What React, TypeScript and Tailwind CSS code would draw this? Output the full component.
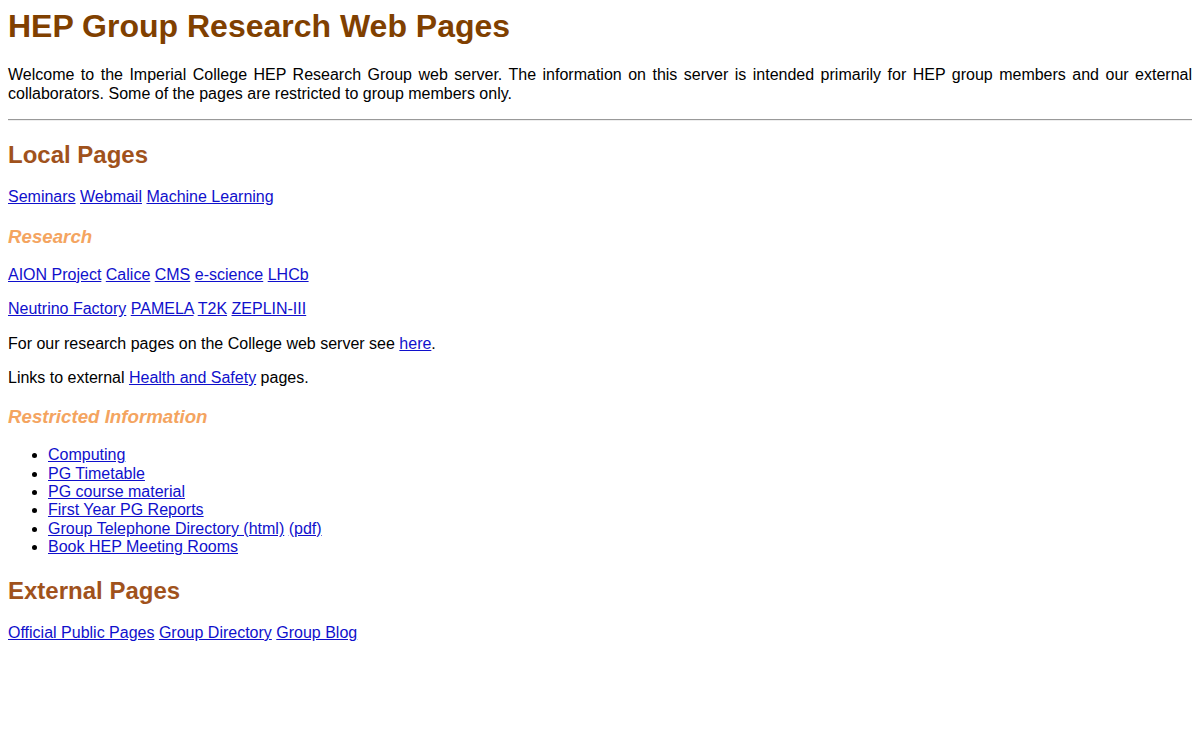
const A = ({ children }: { children: React.ReactNode }) => (
  <a href="#" className="text-[#1010cc] underline">{children}</a>
);
import React from "react";

export default function App() {
  const p = "my-4";
  const h3 = "text-[18.72px] font-bold italic text-[#f4a460] my-[18.72px]";
  const h2 = "text-[24px] font-bold text-[#a0521c] my-[19.92px]";
  return (
    <div className="p-2 bg-white text-black text-[16px] leading-[1.15] min-h-[740px]" style={{ fontFamily: '"Liberation Sans", Arial, sans-serif' }}>
      <h1 className="text-[32px] font-bold text-[#804000] mt-0 mb-[21.44px]">HEP Group Research Web Pages</h1>
      <p className={p + " text-justify"}>
        Welcome to the Imperial College HEP Research Group web server. The information on this server is intended primarily for HEP group members and our external collaborators. Some of the pages are restricted to group members only.
      </p>
      <hr className="my-2 border-t border-[#999] border-b border-b-[#eee]" />
      <h2 className={h2}>Local Pages</h2>
      <p className={p}><A>Seminars</A> <A>Webmail</A> <A>Machine Learning</A></p>
      <h3 className={h3}>Research</h3>
      <p className={p}><A>AION Project</A> <A>Calice</A> <A>CMS</A> <A>e-science</A> <A>LHCb</A></p>
      <p className={p}><A>Neutrino Factory</A> <A>PAMELA</A> <A>T2K</A> <A>ZEPLIN-III</A></p>
      <p className={p}>For our research pages on the College web server see <A>here</A>.</p>
      <p className={p}>Links to external <A>Health and Safety</A> pages.</p>
      <h3 className={h3}>Restricted Information</h3>
      <ul className="my-4 pl-10 list-disc">
        <li><A>Computing</A></li>
        <li><A>PG Timetable</A></li>
        <li><A>PG course material</A></li>
        <li><A>First Year PG Reports</A></li>
        <li><A>Group Telephone Directory (html)</A> <A>(pdf)</A></li>
        <li><A>Book HEP Meeting Rooms</A></li>
      </ul>
      <h2 className={h2}>External Pages</h2>
      <p className={p}><A>Official Public Pages</A> <A>Group Directory</A> <A>Group Blog</A></p>
    </div>
  );
}
